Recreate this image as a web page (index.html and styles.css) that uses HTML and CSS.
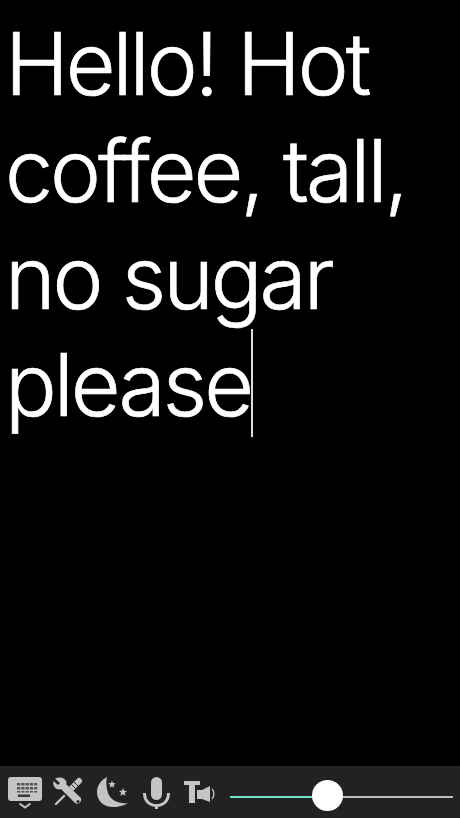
FILE: index.html
```html
<!DOCTYPE html>
<html lang="en">
<head>
<meta charset="utf-8">
<title>Speak</title>
<link rel="stylesheet" href="styles.css">
</head>
<body>
<main class="screen">
  <div class="editor"><span class="text">Hello! Hot coffee, tall, no sugar please</span><span class="caret"></span></div>
  <div class="toolbar">
    <svg class="icon keyboard" viewBox="0 0 34 32"><path fill="#c4c4c4" d="M3 0H31a3 3 0 0 1 3 3V21a3 3 0 0 1-3 3H3a3 3 0 0 1-3-3V3a3 3 0 0 1 3-3Z"/><path fill="#555" d="M9 6h3.300v2.500H9ZM13.300 6h3.300v2.500h-3.300ZM17.600 6h3.300v2.500h-3.300ZM21.900 6h3.300v2.500h-3.300ZM26.200 6h3v2.500h-3ZM9 10h3.300v2.500H9ZM13.300 10h3.300v2.500h-3.300ZM17.600 10h3.300v2.500h-3.300ZM21.900 10h3.300v2.500h-3.300ZM26.200 10h3v2.500h-3ZM9 14h3.300v1.500H9ZM13.300 14h3.300v1.500h-3.300ZM17.600 14h3.300v1.500h-3.300ZM21.900 14h3.300v1.500h-3.300ZM26.200 14h3v1.500h-3Z"/><path fill="#3a3a3a" d="M10 17.500h12v2.500H10Z"/><path fill="none" stroke="#c4c4c4" stroke-width="2" d="M11.500 26.500l5.500 4 5.500-4"/></svg>
    <svg class="icon tools" viewBox="0 0 30 30"><path fill="none" stroke="#c4c4c4" stroke-width="2.400" stroke-linecap="round" d="M3 27L15 15"/><path fill="none" stroke="#c4c4c4" stroke-width="6" stroke-linecap="round" d="M18 12L26 4"/><path fill="none" stroke="#222" stroke-width="1" d="M21 5l4 4M18.500 7.500l4 4"/><path fill="none" stroke="#222" stroke-width="9" d="M10 10L25 25"/><path fill="#c4c4c4" d="M2 1.500L7 6 5 8 .5 4C-.5 8 1.500 12 6 12.500c1.500 0 2-.5 2.500 0L22 26a4 4 0 0 0 5.500-5.500L13.500 7.500c-.5-.5 0-1 0-2.500C12.500 1 7 -1 2 1.500Z"/><circle cx="25" cy="24.500" r="1.500" fill="#222"/></svg>
    <svg class="icon moon" viewBox="0 0 31 30"><path fill="#c4c4c4" d="M10 0C2 4 0 11 0 15 0 24 7 30 16 30 22 30 28 28 31 26 22 27 14 24 11 16 9 10 9 4 10 0Z"/><path fill="#c4c4c4" d="M15 3.500l1 2.500 2.700.2-2 1.800.7 2.700-2.400-1.500-2.400 1.500.7-2.700-2-1.800 2.700-.2ZM26 11l1.100 2.700 3 .2-2.300 1.900.8 3-2.600-1.600-2.600 1.600.8-3-2.300-1.900 3-.2Z"/></svg>
    <svg class="icon mic" viewBox="0 0 27 32"><rect x="8" y="0" width="11" height="23" rx="5.500" fill="#c4c4c4"/><path fill="none" stroke="#c4c4c4" stroke-width="3" d="M1.500 16c0 8 5 12.500 12 12.500s12-4.500 12-12.500M13.500 28v4"/></svg>
    <svg class="icon speak" viewBox="0 0 32 22"><path fill="#c4c4c4" d="M0 0H16V4H11V22H5V4H0ZM13 9H18L26 5V21L18 18H13Z"/><path fill="none" stroke="#c4c4c4" stroke-width="1.300" d="M28 8c2.500 2.500 2.500 7 0 10"/></svg>
    <div class="slider"><div class="fill"></div><div class="rest"></div><div class="thumb"></div></div>
  </div>
</main>
</body>
</html>
```
FILE: styles.css
```css
html, body { margin: 0; padding: 0; background: #000; }
.screen { width: 460px; height: 818px; display: flex; flex-direction: column; overflow: hidden; }
.editor { flex: 1; padding: 11px 8px 0 5px; color: #fff; font-family: Inter, "Liberation Sans", sans-serif; font-size: 86px; line-height: 107px; letter-spacing: -3px; font-weight: 300; -webkit-text-stroke: 0.7px #fff; }
.caret { display: inline-block; width: 2px; height: 108px; margin-top: -4px; background: #ddd; vertical-align: -21px; }
.toolbar { height: 52px; box-sizing: border-box; background: #222; display: flex; align-items: flex-start; padding: 11px 7px 0 8px; }
.icon { display: block; flex: none; }
.keyboard { width: 34px; height: 32px; margin-right: 11px; }
.tools { width: 30px; height: 30px; margin-right: 14px; }
.moon { width: 31px; height: 30px; margin-right: 15px; }
.mic { width: 27px; height: 32px; margin-right: 14px; }
.speak { width: 32px; height: 22px; margin-top: 4px; margin-right: 14px; }
.slider { flex: 1; display: flex; align-items: center; position: relative; height: 31px; margin-top: 3px; }
.fill { width: 82px; height: 2px; margin-top: 2px; background: #6fe0c8; }
.rest { flex: 1; height: 2px; margin-top: 2px; background: #bbb; }
.thumb { position: absolute; left: 82px; top: 0; width: 31px; height: 31px; border-radius: 50%; background: #fff; }
```
